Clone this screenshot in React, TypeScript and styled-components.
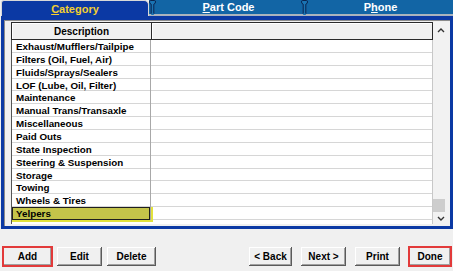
import styled, { createGlobalStyle } from 'styled-components'

const GlobalStyle = createGlobalStyle`
  body {
    margin: 0;
    background: #f0f0f0;
    font-family: "Liberation Sans", Arial, sans-serif;
  }
`;

const categories = [
  'Exhaust/Mufflers/Tailpipe',
  'Filters (Oil, Fuel, Air)',
  'Fluids/Sprays/Sealers',
  'LOF (Lube, Oil, Filter)',
  'Maintenance',
  'Manual Trans/Transaxle',
  'Miscellaneous',
  'Paid Outs',
  'State Inspection',
  'Steering & Suspension',
  'Storage',
  'Towing',
  'Wheels & Tires',
  'Yelpers'
];

const Root = styled.div`
  width: 453px;
  height: 271px;
  background: #f0f0f0;
  display: flex;
  flex-direction: column;
  overflow: hidden;
`;

const TabBar = styled.div`
  display: flex;
  height: 16px;
  padding-left: 1px;
`;

const ActiveTab = styled.div`
  box-sizing: border-box;
  width: 148px;
  height: 16px;
  background: #0b39a4;
  border: 1px solid #d8d8d8;
  border-bottom: none;
  border-radius: 3px 5px 0 0;
  color: #f4d030;
  font-weight: bold;
  font-size: 11px;
  display: flex;
  align-items: center;
  justify-content: center;
  padding-top: 1px;
`;

const Tab = styled.div`
  box-sizing: border-box;
  flex: 1;
  height: 16px;
  background: #1265a5;
  border-bottom: 2px solid #aab3bd;
  color: #ffffff;
  font-weight: bold;
  font-size: 11px;
  display: flex;
  align-items: center;
  justify-content: center;
`;

const Divider = () => (
  <svg width="7" height="16" viewBox="0 0 7 16" style={{ flexShrink: 0, background: '#1265a5' }}>
    <path
      d="M1.5,0.5 H5.5 Q6.5,0.5 6.5,2 Q6.5,3.6 4.8,4.2 V15 H2.2 V4.2 Q0.5,3.6 0.5,2 Q0.5,0.5 1.5,0.5 Z"
      fill="#1a74b4"
      stroke="#0a2450"
      strokeWidth="1"
    />
    <rect x="0" y="14" width="7" height="2" fill="#aab3bd" />
    <rect x="2.2" y="13.5" width="2.6" height="1.5" fill="#1a74b4" />
  </svg>
);

const Panel = styled.div`
  box-sizing: border-box;
  height: 213px;
  margin-left: 1px;
  border: 3px solid #0b39a4;
  border-top-width: 4px;
  display: flex;
`;

const PanelInner = styled.div`
  flex: 1;
  display: flex;
  border-top: 1px solid #8c8c8c;
  border-left: 1px solid #8c8c8c;
  padding: 1px 0 2px 6px;
  background: #f0f0f0;
`;

const Table = styled.div`
  flex: 1;
  background: #ffffff;
  display: flex;
  flex-direction: column;
  overflow: hidden;
`;

const HeaderRow = styled.div`
  box-sizing: border-box;
  display: grid;
  grid-template-columns: 140px 1fr;
  height: 18px;
  border: 1px solid #2a2a2a;
  background: #f0f0f0;
  flex-shrink: 0;
`;

const HeaderCell = styled.div<{ $first?: boolean }>`
  font-weight: bold;
  font-size: 10px;
  display: flex;
  align-items: center;
  justify-content: center;
  box-shadow: inset 1px 1px 0 #ffffff;
  border-right: ${p => (p.$first ? '1px solid #2a2a2a' : 'none')};
`;

const Body = styled.div`
  flex: 1;
  border-left: 1px solid #555555;
  border-right: 1px solid #c8c8c8;
`;

const Row = styled.div`
  box-sizing: border-box;
  display: grid;
  grid-template-columns: 139px 1fr;
  height: 12.87px;
  border-bottom: 1px solid #d6d6d6;
`;

const Cell = styled.div<{ $marked?: boolean }>`
  font-weight: bold;
  font-size: 9.8px;
  line-height: 13px;
  padding-left: 4px;
  white-space: nowrap;
  color: #000000;
  border-right: 1px solid #a8a8a8;
  background: ${p => (p.$marked ? '#c4c44a' : 'transparent')};
  box-shadow: ${p => (p.$marked ? 'inset 0 0 0 1px #1e1e1e, 1px 1px 0 1px #e2e23c' : 'none')};
  position: ${p => (p.$marked ? 'relative' : 'static')};
`;

const EmptyCell = styled.div``;

const ScrollBar = styled.div`
  width: 17px;
  background: #f2f2f2;
  display: flex;
  flex-direction: column;
`;

const Arrow = styled.div<{ $h: number }>`
  height: ${p => p.$h}px;
  display: flex;
  align-items: center;
  justify-content: center;
  padding-right: 2px;
`;

const Track = styled.div`
  flex: 1;
  display: flex;
  flex-direction: column;
  justify-content: flex-end;
`;

const Thumb = styled.div`
  width: 12px;
  height: 13px;
  background: #cdcdcd;
`;

const Chevron = ({ up }: { up?: boolean }) => (
  <svg width="8" height="5" viewBox="0 0 8 5">
    <polyline
      points={up ? '1,4 4,1 7,4' : '1,1 4,4 7,1'}
      fill="none"
      stroke="#333333"
      strokeWidth="1.4"
    />
  </svg>
);

const Footer = styled.div`
  display: flex;
  justify-content: space-between;
  padding: 18px 2px 0 3px;
`;

const ButtonGroup = styled.div<{ $gap: number }>`
  display: flex;
  gap: ${p => p.$gap}px;
`;

const Button = styled.button<{ $w: number; $marked?: boolean }>`
  box-sizing: border-box;
  width: ${p => p.$w}px;
  height: 19px;
  padding: 0;
  background: #f0f0f0;
  border: none;
  box-shadow: inset -1px -1px 0 #5a5a5a, inset 1px 1px 0 #ffffff, inset -2px -2px 0 #a0a0a0;
  font-family: "Liberation Sans", Arial, sans-serif;
  font-weight: bold;
  font-size: 10px;
  color: #000000;
  outline: ${p => (p.$marked ? '2px solid #e23a3a' : 'none')};
  outline-offset: -1px;
`;

const App = () => {
  return (
    <Root>
      <GlobalStyle />
      <TabBar>
        <ActiveTab><span><u>C</u>ategory</span></ActiveTab>
        <Divider />
        <Tab><span><u>P</u>art Code</span></Tab>
        <Divider />
        <Tab><span>P<u>h</u>one</span></Tab>
      </TabBar>
      <Panel>
        <PanelInner>
          <Table>
            <HeaderRow>
              <HeaderCell $first>Description</HeaderCell>
              <HeaderCell />
            </HeaderRow>
            <Body>
              {categories.map(name => (
                <Row key={name}>
                  <Cell $marked={name === 'Yelpers'}>{name}</Cell>
                  <EmptyCell />
                </Row>
              ))}
            </Body>
          </Table>
          <ScrollBar>
            <Arrow $h={17}><Chevron up /></Arrow>
            <Track><Thumb /></Track>
            <Arrow $h={12}><Chevron /></Arrow>
          </ScrollBar>
        </PanelInner>
      </Panel>
      <Footer>
        <ButtonGroup $gap={5}>
          <Button $w={49} $marked>Add</Button>
          <Button $w={45}>Edit</Button>
          <Button $w={49}>Delete</Button>
        </ButtonGroup>
        <ButtonGroup $gap={9}>
          <Button $w={43}>&lt; Back</Button>
          <Button $w={45}>Next &gt;</Button>
          <Button $w={45}>Print</Button>
          <Button $w={42} $marked>Done</Button>
        </ButtonGroup>
      </Footer>
    </Root>
  );
}

export default App;
